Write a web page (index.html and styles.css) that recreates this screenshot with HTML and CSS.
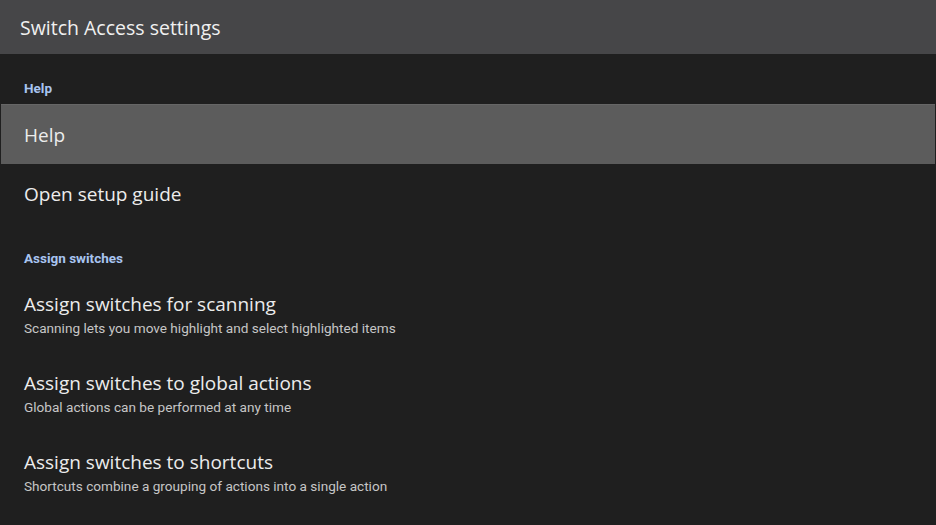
FILE: index.html
```html
<!DOCTYPE html>
<html lang="en">
<head>
    <meta charset="UTF-8">
    <meta name="viewport" content="width=device-width, initial-scale=1.0">
    <title>Switch Access settings</title>
    <link rel="stylesheet" href="styles.css">
</head>
<body>
    <div class="toolbar">
        <h1>Switch Access settings</h1>
    </div>

    <div class="prefs">
        <div class="category">Help</div>
        <div class="pref focused">
            <div class="pref-title">Help</div>
        </div>
        <div class="pref">
            <div class="pref-title">Open setup guide</div>
        </div>

        <div class="category">Assign switches</div>
        <div class="pref two-line">
            <div class="pref-title">Assign switches for scanning</div>
            <div class="pref-summary">Scanning lets you move highlight and select highlighted items</div>
        </div>
        <div class="pref two-line">
            <div class="pref-title">Assign switches to global actions</div>
            <div class="pref-summary">Global actions can be performed at any time</div>
        </div>
        <div class="pref two-line">
            <div class="pref-title">Assign switches to shortcuts</div>
            <div class="pref-summary">Shortcuts combine a grouping of actions into a single action</div>
        </div>
    </div>
</body>
</html>
```

FILE: styles.css
```css
* {
    margin: 0;
    padding: 0;
    box-sizing: border-box;
}

body {
    background: #1f1f1f;
    color: #e6e6e6;
    font-family: 'Open Sans', Roboto, sans-serif;
    overflow: hidden;
}

.toolbar {
    height: 54px;
    background: #464648;
    display: flex;
    align-items: center;
    padding-left: 20px;
}

.toolbar h1 {
    font-size: 19.5px;
    font-weight: 400;
    color: #f0f0f0;
}

.prefs {
    display: flex;
    flex-direction: column;
}

.category {
    font-family: Roboto, sans-serif;
    font-size: 13.5px;
    font-weight: 700;
    color: #a8c4f0;
    padding: 26px 24px 8px;
    height: 50px;
}

.pref {
    height: 60px;
    display: flex;
    flex-direction: column;
    justify-content: center;
    padding: 0 24px;
}

.pref.focused {
    background: #5c5c5c;
    margin: 0 1px;
    padding-left: 23px;
    border-top: 1px solid #666;
}

.pref.two-line {
    height: 79px;
    padding-top: 5px;
}

.pref-title {
    font-size: 19px;
    color: #ececec;
    line-height: 24px;
}

.pref-summary {
    font-family: Roboto, sans-serif;
    font-size: 13.6px;
    color: #c6c6c6;
    line-height: 24px;
}
```
